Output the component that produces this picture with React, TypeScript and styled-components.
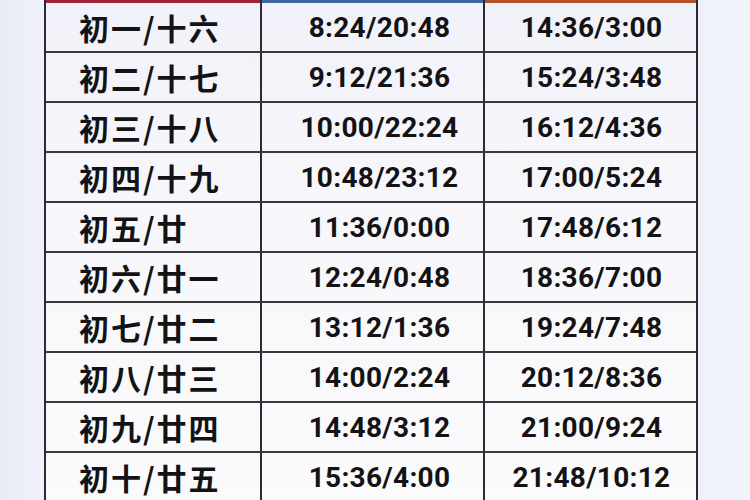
import styled, { createGlobalStyle } from "styled-components"

const GlobalStyle = createGlobalStyle`
html, body {
  margin: 0;
  padding: 0;
  width: 750px;
  height: 500px;
  overflow: hidden;
  background: #eceef8;
}
`

const Page = styled.div`
width: 750px;
height: 500px;
overflow: hidden;
display: flex;
padding-left: 44px;
box-sizing: border-box;
background: linear-gradient(90deg, #e9ebf7 0%, #f0f1f9 6%, #eef0f9 92%, #f3f4fa 100%);
`

const Table = styled.div`
display: grid;
grid-template-columns: 216px 223px 211px;
align-content: start;
border-left: 2px solid #2c2c30;
border-right: 2px solid #2c2c30;
height: 540px;
background: linear-gradient(180deg, #f1f1f9 0%, #f7f7fb 40%, #fbfbfc 100%);
`

const HeadBar = styled.div<{ $color: string; $last?: boolean }>`
height: 3px;
background: ${(p) => p.$color};
border-right: ${(p) => (p.$last ? "none" : "2px solid #2c2c30")};
`

const Cell = styled.div<{ $last?: boolean; $left?: boolean; $shift: number }>`
height: 48px;
border-bottom: 2px solid #3a3a3e;
border-right: ${(p) => (p.$last ? "none" : "2px solid #2c2c30")};
display: flex;
align-items: center;
justify-content: ${(p) => (p.$left ? "flex-start" : "center")};
padding-left: ${(p) => p.$shift}px;
color: #131315;
font-weight: 700;
white-space: nowrap;
`

const DayText = styled.span`
font-family: "Noto Sans CJK SC", "Noto Sans", sans-serif;
font-size: 30px;
letter-spacing: 2px;
`

const TimeText = styled.span`
font-family: Roboto, "Liberation Sans", sans-serif;
font-size: 28px;
letter-spacing: 0.3px;
`

const rows = [
  ["初一/十六", "8:24/20:48", "14:36/3:00"],
  ["初二/十七", "9:12/21:36", "15:24/3:48"],
  ["初三/十八", "10:00/22:24", "16:12/4:36"],
  ["初四/十九", "10:48/23:12", "17:00/5:24"],
  ["初五/廿", "11:36/0:00", "17:48/6:12"],
  ["初六/廿一", "12:24/0:48", "18:36/7:00"],
  ["初七/廿二", "13:12/1:36", "19:24/7:48"],
  ["初八/廿三", "14:00/2:24", "20:12/8:36"],
  ["初九/廿四", "14:48/3:12", "21:00/9:24"],
  ["初十/廿五", "15:36/4:00", "21:48/10:12"],
]

const App = () => {
  return (
    <>
      <GlobalStyle />
      <Page>
        <Table>
          <HeadBar $color="#a3233f" />
          <HeadBar $color="#3d68a6" />
          <HeadBar $color="#b4532c" $last />
          {rows.map((r) => (
            <>
              <Cell key={r[0]} $left $shift={33}>
                <DayText>{r[0]}</DayText>
              </Cell>
              <Cell key={r[1]} $shift={14}>
                <TimeText>{r[1]}</TimeText>
              </Cell>
              <Cell key={r[2]} $last $shift={2}>
                <TimeText>{r[2]}</TimeText>
              </Cell>
            </>
          ))}
        </Table>
      </Page>
    </>
  )
}

export default App
